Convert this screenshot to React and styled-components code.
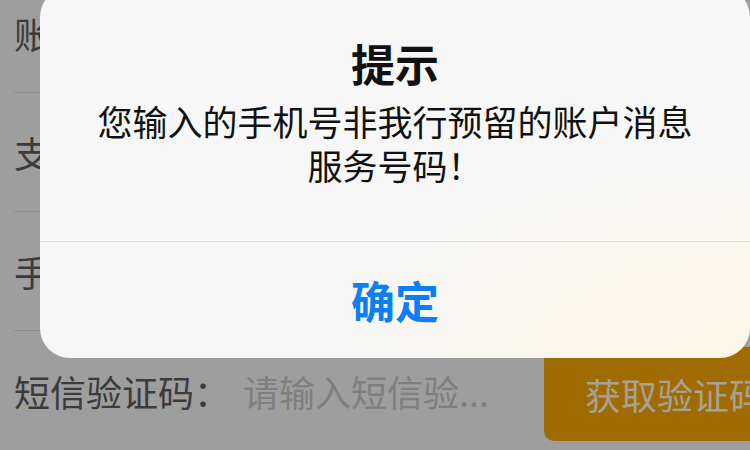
import React from 'react'
import styled, { createGlobalStyle } from 'styled-components'

const GlobalStyle = createGlobalStyle`
  html, body {
    margin: 0;
    padding: 0;
    width: 750px;
    height: 450px;
    overflow: hidden;
    background: #9e9e9e;
    font-family: "Noto Sans CJK SC", "Noto Sans", sans-serif;
  }
`

const Page = styled.div`
  position: relative;
  width: 750px;
  height: 450px;
  overflow: hidden;
`

const Form = styled.div`
  display: flex;
  flex-direction: column;
  margin-top: -26px;
`

const Row = styled.div`
  display: flex;
  align-items: center;
  height: 119px;
  box-sizing: border-box;
  margin-left: 14px;
  border-bottom: ${({ last }) => (last ? 'none' : '1px solid #8d8d8d')};
`

const Label = styled.span`
  font-size: 36px;
  color: #3b3b3b;
  width: 229px;
  white-space: nowrap;
`

const Placeholder = styled.span`
  font-size: 36px;
  color: #7f7f7f;
  width: 301px;
  white-space: nowrap;
`

const CodeButton = styled.div`
  display: flex;
  align-items: center;
  height: 94px;
  margin-top: 6px;
  padding-left: 41px;
  flex: 1;
  margin-right: -40px;
  background: #a06b00;
  border-radius: 10px;
  font-size: 36px;
  color: #a7a197;
  white-space: nowrap;
`

const Overlay = styled.div`
  position: absolute;
  left: 40px;
  top: -13px;
  width: 710px;
  height: 371px;
  border-radius: 30px;
  overflow: hidden;
  display: flex;
  flex-direction: column;
  background:
    radial-gradient(ellipse 420px 200px at 100% 100%, rgba(255, 246, 222, 0.75), rgba(255, 246, 222, 0) 100%),
    #f7f7f7;
`

const Body = styled.div`
  display: flex;
  flex-direction: column;
  align-items: center;
  padding: 51px 50px 0;
  height: 255px;
  box-sizing: border-box;
  border-bottom: 1px solid #dcdcdc;
`

const Title = styled.div`
  font-size: 44px;
  font-weight: 700;
  line-height: 50px;
  color: #111;
  margin-bottom: 11px;
`

const Message = styled.div`
  font-size: 35px;
  line-height: 44px;
  color: #111;
  text-align: center;
`

const Action = styled.div`
  flex: 1;
  display: flex;
  align-items: center;
  justify-content: center;
  font-size: 44px;
  font-weight: 700;
  color: #0e7ef5;
`

const rows = [
  { label: '账户号码：' },
  { label: '支付密码：' },
  { label: '手机号码：' },
]

const App = () => {
  return (
    <Page>
      <GlobalStyle />
      <Form>
        {rows.map((r) => (
          <Row key={r.label}>
            <Label>{r.label}</Label>
          </Row>
        ))}
        <Row last>
          <Label>短信验证码：</Label>
          <Placeholder>请输入短信验...</Placeholder>
          <CodeButton>获取验证码</CodeButton>
        </Row>
      </Form>
      <Overlay>
        <Body>
          <Title>提示</Title>
          <Message>您输入的手机号非我行预留的账户消息服务号码！</Message>
        </Body>
        <Action>确定</Action>
      </Overlay>
    </Page>
  )
}

export default App
